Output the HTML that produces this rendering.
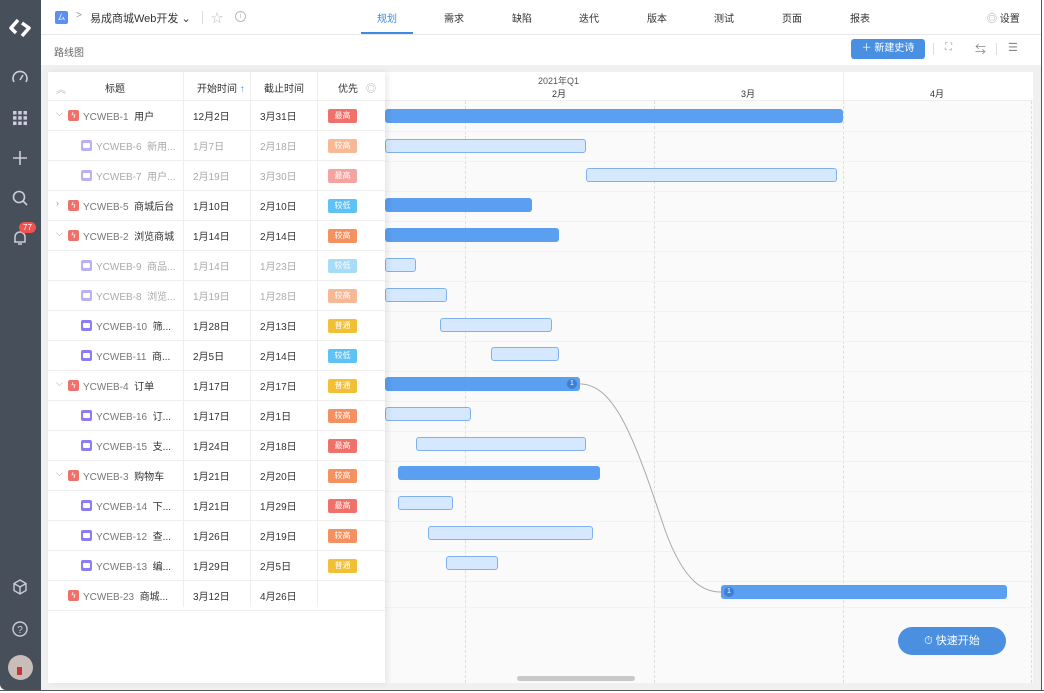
<!DOCTYPE html>
<html><head><meta charset="utf-8">
<style>
*{box-sizing:border-box;margin:0;padding:0}
body{width:1044px;height:693px;overflow:hidden;background:#fff;font-family:"Liberation Sans","Noto Sans CJK SC",sans-serif;font-size:10px;color:#333;position:relative}
.a{position:absolute}
#side{left:0;top:0;width:41px;height:690px;background:#474f5b;border-radius:0 0 0 6px}
.si{position:absolute;left:10px;width:20px;height:20px}
#top{left:41px;top:0;width:1000px;height:35px;border-bottom:1px solid #e8e8e8;background:#fff}
.tab{position:absolute;top:10px;font-size:10px;color:#333}
#sub{left:41px;top:35px;width:1000px;height:30px;background:#fff}
#bg{left:41px;top:65px;width:1000px;height:625px;background:#f0f0f0}
#card{left:48px;top:72px;width:985px;height:611px;background:#fafafa}
#tbl{left:48px;top:72px;width:337px;height:611px;background:#fff;box-shadow:3px 0 6px rgba(0,0,0,.08)}
.row{position:absolute;left:0;width:337px;height:30px;border-bottom:1px solid #eee;font-size:10px}
.row span{position:absolute;top:7px;white-space:nowrap}
.vl{position:absolute;top:0;width:1px;height:535px;background:#eee}
.tag{position:absolute;left:280px;top:8px;width:29px;height:14px;border-radius:2px;color:#fff;font-size:8px;text-align:center;line-height:14px}
.ei{position:absolute;top:9px;width:11px;height:11px;border-radius:2px;background:#f0706a;color:#fff;font-size:8px;line-height:11px;text-align:center}
.st{position:absolute;top:9px;width:11px;height:11px;border-radius:2px;background:#8c7ef0}
.st:after{content:"";position:absolute;left:2px;top:3px;width:7px;height:5px;border-radius:1px;background:#fff}
.ar{position:absolute;left:8px;top:6px;color:#999;font-size:9px}
.f{color:#aaa}
.bar{position:absolute;height:14px;border-radius:3px}
.b{background:#5b9ff0}
.l{background:#d6e8fd;border:1px solid #7fb1ee}
.gl{position:absolute;left:385px;width:648px;height:1px;background:#f2f2f2}
.dl{position:absolute;top:101px;width:0;height:582px;border-left:1px dashed #ddd}
.badge{position:absolute;right:3px;top:2px;width:10px;height:10px;border-radius:5px;background:#3c7fd6;color:#fff;font-size:7px;line-height:10px;text-align:center}
</style></head><body>
<div id="side" class="a">
<svg class="si" style="top:17px;left:9px;width:22px;height:22px" viewBox="0 0 22 22"><path d="M9 3 L2 11 L7 16 M13 6 L20 11 L13 19" stroke="#fff" stroke-width="3.5" fill="none" stroke-linejoin="round"/></svg>
<svg class="si" style="top:68px" viewBox="0 0 20 20"><path d="M4 14 A7 7 0 1 1 16 14" stroke="#ccd" stroke-width="1.6" fill="none"/><path d="M10 12 L13 7" stroke="#ccd" stroke-width="1.6"/></svg>
<svg class="si" style="top:108px" viewBox="0 0 20 20" fill="#ccd"><rect x="3" y="3" width="3.5" height="3.5"/><rect x="8.2" y="3" width="3.5" height="3.5"/><rect x="13.5" y="3" width="3.5" height="3.5"/><rect x="3" y="8.2" width="3.5" height="3.5"/><rect x="8.2" y="8.2" width="3.5" height="3.5"/><rect x="13.5" y="8.2" width="3.5" height="3.5"/><rect x="3" y="13.5" width="3.5" height="3.5"/><rect x="8.2" y="13.5" width="3.5" height="3.5"/><rect x="13.5" y="13.5" width="3.5" height="3.5"/></svg>
<svg class="si" style="top:148px" viewBox="0 0 20 20"><path d="M10 3V17M3 10H17" stroke="#ccd" stroke-width="1.6"/></svg>
<svg class="si" style="top:188px" viewBox="0 0 20 20"><circle cx="9" cy="9" r="5.5" stroke="#ccd" stroke-width="1.6" fill="none"/><path d="M13 13L17 17" stroke="#ccd" stroke-width="1.6"/></svg>
<svg class="si" style="top:228px" viewBox="0 0 20 20"><path d="M5 14V9a5 5 0 0 1 10 0v5H4M8 16h4" stroke="#ccd" stroke-width="1.5" fill="none"/></svg>
<div class="a" style="left:19px;top:222px;width:17px;height:11px;border-radius:6px;background:#f0524f;color:#fff;font-size:8px;text-align:center;line-height:11px">77</div>
<svg class="si" style="top:577px" viewBox="0 0 20 20"><path d="M10 3L16 6.5V13.5L10 17L4 13.5V6.5Z M4 6.5L10 10L16 6.5 M10 10V17" stroke="#ccd" stroke-width="1.4" fill="none"/></svg>
<svg class="si" style="top:619px" viewBox="0 0 20 20"><circle cx="10" cy="10" r="7" stroke="#ccd" stroke-width="1.4" fill="none"/><text x="10" y="14" font-size="10" fill="#ccd" text-anchor="middle" font-family="Liberation Sans">?</text></svg>
<div class="a" style="left:8px;top:655px;width:25px;height:25px;border-radius:50%;background:#c8bdb8;overflow:hidden"><div class="a" style="left:9px;top:12px;width:5px;height:8px;background:#c33"></div></div>
</div>
<div class="a" style="left:1041px;top:0;width:3px;height:693px;background:#fff;border-left:1px solid #555"></div>
<div class="a" style="left:0;top:690px;width:1044px;height:3px;background:#fff;border-top:1px solid #555"></div>

<div id="top" class="a">
<div class="a" style="left:14px;top:11px;width:13px;height:13px;border-radius:2px;background:#5b8ff0;color:#fff;font-size:8px;text-align:center;line-height:13px">ㄙ</div>
<span class="a" style="left:35px;top:10px;color:#999">&gt;</span>
<span class="a" style="left:49px;top:10px;font-size:11px;color:#333">易成商城Web开发 ⌄</span>
<div class="a" style="left:161px;top:11px;width:1px;height:13px;background:#ddd"></div>
<span class="a" style="left:170px;top:9px;color:#bbb;font-size:12px">☆</span>
<div class="a" style="left:194px;top:11px;width:11px;height:11px;border:1px solid #bbb;border-radius:50%;color:#bbb;font-size:7px;text-align:center;line-height:9px">i</div>
<span class="tab" style="left:336px;color:#3c8ce7">规划</span>
<div class="a" style="left:320px;top:32px;width:52px;height:2px;background:#3c8ce7"></div>
<span class="tab" style="left:403px">需求</span>
<span class="tab" style="left:471px">缺陷</span>
<span class="tab" style="left:538px">迭代</span>
<span class="tab" style="left:606px">版本</span>
<span class="tab" style="left:673px">测试</span>
<span class="tab" style="left:741px">页面</span>
<span class="tab" style="left:809px">报表</span>
<span class="tab" style="left:946px"><span style="color:#999">◎</span> 设置</span>
</div>
<div id="sub" class="a">
<span class="a" style="left:13px;top:9px;color:#666">路线图</span>
<div class="a" style="left:810px;top:4px;width:74px;height:20px;background:#4a90e2;border-radius:3px;color:#fff;font-size:10px;line-height:20px;text-align:center">＋ 新建史诗</div>
<div class="a" style="left:892px;top:8px;width:1px;height:12px;background:#ddd"></div>
<span class="a" style="left:904px;top:7px;color:#999">⛶</span>
<span class="a" style="left:934px;top:6px;color:#888;font-size:11px">⇆</span>
<div class="a" style="left:955px;top:8px;width:1px;height:12px;background:#ddd"></div>
<span class="a" style="left:967px;top:6px;color:#888;font-size:11px">☰</span>
</div>
<div id="bg" class="a"></div>
<div id="card" class="a"></div>

<!-- gantt header -->
<div class="a" style="left:385px;top:72px;width:648px;height:29px;background:#fff;border-bottom:1px solid #eee"></div>
<span class="a" style="left:538px;top:74px;font-size:9px;color:#555">2021年Q1</span>
<span class="a" style="left:552px;top:87px;font-size:9px;color:#333">2月</span>
<span class="a" style="left:741px;top:87px;font-size:9px;color:#333">3月</span>
<span class="a" style="left:930px;top:87px;font-size:9px;color:#333">4月</span>
<div class="a" style="left:843px;top:72px;width:1px;height:29px;background:#eee"></div>
<div class="dl" style="left:465px"></div>
<div class="dl" style="left:654px"></div>
<div class="dl" style="left:843px"></div>
<div class="dl" style="left:1031px"></div>
<div class="gl" style="top:131px"></div><div class="gl" style="top:161px"></div><div class="gl" style="top:191px"></div><div class="gl" style="top:221px"></div><div class="gl" style="top:251px"></div><div class="gl" style="top:281px"></div><div class="gl" style="top:311px"></div><div class="gl" style="top:341px"></div><div class="gl" style="top:371px"></div><div class="gl" style="top:401px"></div><div class="gl" style="top:431px"></div><div class="gl" style="top:461px"></div><div class="gl" style="top:491px"></div><div class="gl" style="top:521px"></div><div class="gl" style="top:551px"></div><div class="gl" style="top:581px"></div><div class="gl" style="top:607px"></div>

<div class="bar b" style="left:385px;top:109px;width:458px"></div>
<div class="bar l" style="left:385px;top:139px;width:201px"></div>
<div class="bar l" style="left:586px;top:168px;width:251px"></div>
<div class="bar b" style="left:385px;top:198px;width:147px"></div>
<div class="bar b" style="left:385px;top:228px;width:174px"></div>
<div class="bar l" style="left:385px;top:258px;width:31px"></div>
<div class="bar l" style="left:385px;top:288px;width:62px"></div>
<div class="bar l" style="left:440px;top:318px;width:112px"></div>
<div class="bar l" style="left:491px;top:347px;width:68px"></div>
<div class="bar b" style="left:385px;top:377px;width:195px"><div class="badge">1</div></div>
<div class="bar l" style="left:385px;top:407px;width:86px"></div>
<div class="bar l" style="left:416px;top:437px;width:170px"></div>
<div class="bar b" style="left:398px;top:466px;width:202px"></div>
<div class="bar l" style="left:398px;top:496px;width:55px"></div>
<div class="bar l" style="left:428px;top:526px;width:165px"></div>
<div class="bar l" style="left:446px;top:556px;width:52px"></div>
<div class="bar b" style="left:721px;top:585px;width:286px"><div class="badge" style="left:3px;right:auto">1</div></div>
<svg class="a" style="left:575px;top:380px" width="150" height="215"><path d="M5 4 C40 4, 60 60, 90 150 C110 205, 130 212, 146 212" stroke="#aaa" stroke-width="1" fill="none"/></svg>

<div class="a" style="left:898px;top:627px;width:108px;height:28px;border-radius:14px;background:#4a8fe0;color:#fff;font-size:11px;line-height:28px;text-align:center">⏱ 快速开始</div>
<div class="a" style="left:517px;top:676px;width:118px;height:5px;border-radius:3px;background:#c8c8c8"></div>

<div id="tbl" class="a">
<div class="row" style="top:0;height:29px"><span style="left:8px;top:9px;color:#bbb">︽</span><span style="left:57px;top:8px">标题</span><span style="left:149px;top:8px">开始时间 <b style="color:#3c8ce7;font-weight:normal">↑</b></span><span style="left:216px;top:8px">截止时间</span><span style="left:290px;top:8px">优先</span><span style="left:318px;top:8px;color:#aaa">◎</span></div>
<div class="vl" style="left:135px"></div><div class="vl" style="left:202px"></div><div class="vl" style="left:269px"></div>

<div class="row" style="top:29px"><span class="ar">⌵</span><div class="ei" style="left:20px">ϟ</div><span style="left:35px"><i class="f" style="font-style:normal;color:#777">YCWEB-1</i>&nbsp; 用户</span><span style="left:145px">12月2日</span><span style="left:212px">3月31日</span><div class="tag" style="background:#f0706a">最高</div></div>
<div class="row f" style="top:59px"><div class="st" style="left:33px;opacity:.6"></div><span style="left:48px">YCWEB-6&nbsp; 新用...</span><span style="left:145px">1月7日</span><span style="left:212px">2月18日</span><div class="tag" style="background:#f7b896">较高</div></div>
<div class="row f" style="top:89px"><div class="st" style="left:33px;opacity:.6"></div><span style="left:48px">YCWEB-7&nbsp; 用户...</span><span style="left:145px">2月19日</span><span style="left:212px">3月30日</span><div class="tag" style="background:#f5a3a0">最高</div></div>
<div class="row" style="top:119px"><span class="ar">›</span><div class="ei" style="left:20px">ϟ</div><span style="left:35px"><i style="font-style:normal;color:#777">YCWEB-5</i>&nbsp; 商城后台</span><span style="left:145px">1月10日</span><span style="left:212px">2月10日</span><div class="tag" style="background:#5fc2f7">较低</div></div>
<div class="row" style="top:149px"><span class="ar">⌵</span><div class="ei" style="left:20px">ϟ</div><span style="left:35px"><i style="font-style:normal;color:#777">YCWEB-2</i>&nbsp; 浏览商城</span><span style="left:145px">1月14日</span><span style="left:212px">2月14日</span><div class="tag" style="background:#f59160">较高</div></div>
<div class="row f" style="top:179px"><div class="st" style="left:33px;opacity:.6"></div><span style="left:48px">YCWEB-9&nbsp; 商品...</span><span style="left:145px">1月14日</span><span style="left:212px">1月23日</span><div class="tag" style="background:#a6dcf7">较低</div></div>
<div class="row f" style="top:209px"><div class="st" style="left:33px;opacity:.6"></div><span style="left:48px">YCWEB-8&nbsp; 浏览...</span><span style="left:145px">1月19日</span><span style="left:212px">1月28日</span><div class="tag" style="background:#f7b896">较高</div></div>
<div class="row" style="top:239px"><div class="st" style="left:33px"></div><span style="left:48px"><i style="font-style:normal;color:#777">YCWEB-10</i>&nbsp; 筛...</span><span style="left:145px">1月28日</span><span style="left:212px">2月13日</span><div class="tag" style="background:#f2c037">普通</div></div>
<div class="row" style="top:269px"><div class="st" style="left:33px"></div><span style="left:48px"><i style="font-style:normal;color:#777">YCWEB-11</i>&nbsp; 商...</span><span style="left:145px">2月5日</span><span style="left:212px">2月14日</span><div class="tag" style="background:#5fc2f7">较低</div></div>
<div class="row" style="top:299px"><span class="ar">⌵</span><div class="ei" style="left:20px">ϟ</div><span style="left:35px"><i style="font-style:normal;color:#777">YCWEB-4</i>&nbsp; 订单</span><span style="left:145px">1月17日</span><span style="left:212px">2月17日</span><div class="tag" style="background:#f2c037">普通</div></div>
<div class="row" style="top:329px"><div class="st" style="left:33px"></div><span style="left:48px"><i style="font-style:normal;color:#777">YCWEB-16</i>&nbsp; 订...</span><span style="left:145px">1月17日</span><span style="left:212px">2月1日</span><div class="tag" style="background:#f59160">较高</div></div>
<div class="row" style="top:359px"><div class="st" style="left:33px"></div><span style="left:48px"><i style="font-style:normal;color:#777">YCWEB-15</i>&nbsp; 支...</span><span style="left:145px">1月24日</span><span style="left:212px">2月18日</span><div class="tag" style="background:#f0706a">最高</div></div>
<div class="row" style="top:389px"><span class="ar">⌵</span><div class="ei" style="left:20px">ϟ</div><span style="left:35px"><i style="font-style:normal;color:#777">YCWEB-3</i>&nbsp; 购物车</span><span style="left:145px">1月21日</span><span style="left:212px">2月20日</span><div class="tag" style="background:#f59160">较高</div></div>
<div class="row" style="top:419px"><div class="st" style="left:33px"></div><span style="left:48px"><i style="font-style:normal;color:#777">YCWEB-14</i>&nbsp; 下...</span><span style="left:145px">1月21日</span><span style="left:212px">1月29日</span><div class="tag" style="background:#f0706a">最高</div></div>
<div class="row" style="top:449px"><div class="st" style="left:33px"></div><span style="left:48px"><i style="font-style:normal;color:#777">YCWEB-12</i>&nbsp; 查...</span><span style="left:145px">1月26日</span><span style="left:212px">2月19日</span><div class="tag" style="background:#f59160">较高</div></div>
<div class="row" style="top:479px"><div class="st" style="left:33px"></div><span style="left:48px"><i style="font-style:normal;color:#777">YCWEB-13</i>&nbsp; 编...</span><span style="left:145px">1月29日</span><span style="left:212px">2月5日</span><div class="tag" style="background:#f2c037">普通</div></div>
<div class="row" style="top:509px"><div class="ei" style="left:20px">ϟ</div><span style="left:35px"><i style="font-style:normal;color:#777">YCWEB-23</i>&nbsp; 商城...</span><span style="left:145px">3月12日</span><span style="left:212px">4月26日</span></div>
</div>
</body></html>
